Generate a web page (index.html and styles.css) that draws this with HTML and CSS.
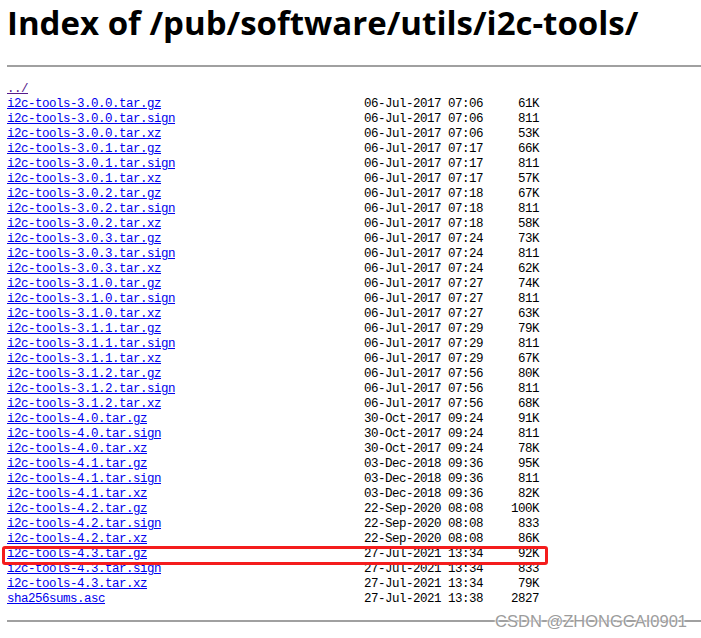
FILE: index.html
```html
<!DOCTYPE html>
<html>
<head>
<meta charset="utf-8">
<title>Index of /pub/software/utils/i2c-tools/</title>
<link rel="stylesheet" href="styles.css">
</head>
<body>
<h1 class="title">Index of /pub/software/utils/i2c-tools/</h1>
<hr class="rule">
<div class="listing">
  <div class="row"><a class="visited" href="#">../</a></div>
  <div class="row"><a href="#">i2c-tools-3.0.0.tar.gz</a><span class="date">06-Jul-2017 07:06</span><span class="size">61K</span></div>
  <div class="row"><a href="#">i2c-tools-3.0.0.tar.sign</a><span class="date">06-Jul-2017 07:06</span><span class="size">811</span></div>
  <div class="row"><a href="#">i2c-tools-3.0.0.tar.xz</a><span class="date">06-Jul-2017 07:06</span><span class="size">53K</span></div>
  <div class="row"><a href="#">i2c-tools-3.0.1.tar.gz</a><span class="date">06-Jul-2017 07:17</span><span class="size">66K</span></div>
  <div class="row"><a href="#">i2c-tools-3.0.1.tar.sign</a><span class="date">06-Jul-2017 07:17</span><span class="size">811</span></div>
  <div class="row"><a href="#">i2c-tools-3.0.1.tar.xz</a><span class="date">06-Jul-2017 07:17</span><span class="size">57K</span></div>
  <div class="row"><a href="#">i2c-tools-3.0.2.tar.gz</a><span class="date">06-Jul-2017 07:18</span><span class="size">67K</span></div>
  <div class="row"><a href="#">i2c-tools-3.0.2.tar.sign</a><span class="date">06-Jul-2017 07:18</span><span class="size">811</span></div>
  <div class="row"><a href="#">i2c-tools-3.0.2.tar.xz</a><span class="date">06-Jul-2017 07:18</span><span class="size">58K</span></div>
  <div class="row"><a href="#">i2c-tools-3.0.3.tar.gz</a><span class="date">06-Jul-2017 07:24</span><span class="size">73K</span></div>
  <div class="row"><a href="#">i2c-tools-3.0.3.tar.sign</a><span class="date">06-Jul-2017 07:24</span><span class="size">811</span></div>
  <div class="row"><a href="#">i2c-tools-3.0.3.tar.xz</a><span class="date">06-Jul-2017 07:24</span><span class="size">62K</span></div>
  <div class="row"><a href="#">i2c-tools-3.1.0.tar.gz</a><span class="date">06-Jul-2017 07:27</span><span class="size">74K</span></div>
  <div class="row"><a href="#">i2c-tools-3.1.0.tar.sign</a><span class="date">06-Jul-2017 07:27</span><span class="size">811</span></div>
  <div class="row"><a href="#">i2c-tools-3.1.0.tar.xz</a><span class="date">06-Jul-2017 07:27</span><span class="size">63K</span></div>
  <div class="row"><a href="#">i2c-tools-3.1.1.tar.gz</a><span class="date">06-Jul-2017 07:29</span><span class="size">79K</span></div>
  <div class="row"><a href="#">i2c-tools-3.1.1.tar.sign</a><span class="date">06-Jul-2017 07:29</span><span class="size">811</span></div>
  <div class="row"><a href="#">i2c-tools-3.1.1.tar.xz</a><span class="date">06-Jul-2017 07:29</span><span class="size">67K</span></div>
  <div class="row"><a href="#">i2c-tools-3.1.2.tar.gz</a><span class="date">06-Jul-2017 07:56</span><span class="size">80K</span></div>
  <div class="row"><a href="#">i2c-tools-3.1.2.tar.sign</a><span class="date">06-Jul-2017 07:56</span><span class="size">811</span></div>
  <div class="row"><a href="#">i2c-tools-3.1.2.tar.xz</a><span class="date">06-Jul-2017 07:56</span><span class="size">68K</span></div>
  <div class="row"><a href="#">i2c-tools-4.0.tar.gz</a><span class="date">30-Oct-2017 09:24</span><span class="size">91K</span></div>
  <div class="row"><a href="#">i2c-tools-4.0.tar.sign</a><span class="date">30-Oct-2017 09:24</span><span class="size">811</span></div>
  <div class="row"><a href="#">i2c-tools-4.0.tar.xz</a><span class="date">30-Oct-2017 09:24</span><span class="size">78K</span></div>
  <div class="row"><a href="#">i2c-tools-4.1.tar.gz</a><span class="date">03-Dec-2018 09:36</span><span class="size">95K</span></div>
  <div class="row"><a href="#">i2c-tools-4.1.tar.sign</a><span class="date">03-Dec-2018 09:36</span><span class="size">811</span></div>
  <div class="row"><a href="#">i2c-tools-4.1.tar.xz</a><span class="date">03-Dec-2018 09:36</span><span class="size">82K</span></div>
  <div class="row"><a href="#">i2c-tools-4.2.tar.gz</a><span class="date">22-Sep-2020 08:08</span><span class="size">100K</span></div>
  <div class="row"><a href="#">i2c-tools-4.2.tar.sign</a><span class="date">22-Sep-2020 08:08</span><span class="size">833</span></div>
  <div class="row"><a href="#">i2c-tools-4.2.tar.xz</a><span class="date">22-Sep-2020 08:08</span><span class="size">86K</span></div>
  <div class="row highlight"><a href="#">i2c-tools-4.3.tar.gz</a><span class="date">27-Jul-2021 13:34</span><span class="size">92K</span></div>
  <div class="row"><a href="#">i2c-tools-4.3.tar.sign</a><span class="date">27-Jul-2021 13:34</span><span class="size">833</span></div>
  <div class="row"><a href="#">i2c-tools-4.3.tar.xz</a><span class="date">27-Jul-2021 13:34</span><span class="size">79K</span></div>
  <div class="row"><a href="#">sha256sums.asc</a><span class="date">27-Jul-2021 13:38</span><span class="size">2827</span></div>
</div>
<hr class="rule bottom">
<div class="watermark">CSDN @ZHONGCAI0901</div>
</body>
</html>
```
FILE: styles.css
```css
html, body {
  margin: 0;
  padding: 0;
  background: #ffffff;
}

body {
  padding-left: 7px;
  position: relative;
  min-height: 638px;
  color: #000;
}

.title {
  font-family: "Open Sans", "Noto Sans", sans-serif;
  font-weight: 700;
  font-size: 33px;
  line-height: 40px;
  margin: 3px 0 0 0;
  letter-spacing: 0;
}

.rule {
  border: 0;
  border-top: 2px solid #a0a0a0;
  margin: 22px 0 0 0;
  height: 0;
}

.listing {
  margin-top: 15px;
  font-family: "Liberation Mono", "DejaVu Sans Mono", monospace;
  font-size: 12.5px;
  letter-spacing: -0.5px;
  line-height: 15px;
}

.row {
  display: grid;
  grid-template-columns: 357px 119px 56px;
  height: 15px;
  white-space: pre;
}

.row a {
  color: #0000ee;
  text-decoration: underline;
  justify-self: start;
}

.row a.visited {
  color: #551a8b;
}

.size {
  text-align: right;
}

.highlight {
  position: relative;
}

.highlight::after {
  content: "";
  position: absolute;
  left: -5px;
  top: -1px;
  width: 540px;
  height: 13px;
  border: 3px solid #f41d1d;
  border-radius: 3px;
}

.bottom {
  margin-top: 13px;
}

.watermark {
  position: absolute;
  right: 14px;
  top: 612px;
  font-family: "Liberation Sans", Arial, sans-serif;
  font-size: 16.5px;
  line-height: 18px;
  color: #9c9c9c;
  text-shadow: 0 0 2px #fff, 0 0 2px #fff, 0 0 2px #fff;
}
```
